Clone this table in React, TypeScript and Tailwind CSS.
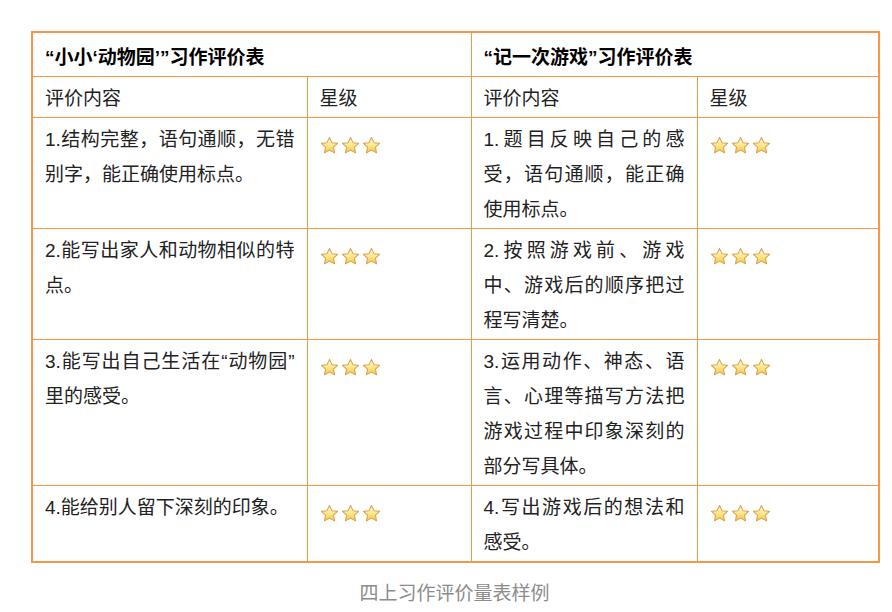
const Q = ({ children }: { children: string }) => (
  <span className="font-['Liberation_Sans',sans-serif]">{children}</span>
);

const rowsLeft = [
  <>1.结构完整，语句通顺，无错别字，能正确使用标点。</>,
  <>2.能写出家人和动物相似的特点。</>,
  <>
    3.能写出自己生活在<Q>“</Q>动物园<Q>”</Q>
    <wbr />
    里的感受。
  </>,
  <>4.能给别人留下深刻的印象。</>,
];

const rowsRight = [
  "1.题目反映自己的感受，语句通顺，能正确使用标点。",
  "2.按照游戏前、游戏中、游戏后的顺序把过程写清楚。",
  "3.运用动作、神态、语言、心理等描写方法把游戏过程中印象深刻的部分写具体。",
  "4.写出游戏后的想法和感受。",
];

const Star = () => (
  <svg width="19" height="19" viewBox="0 0 24 24">
    <defs>
      <linearGradient id="starFill" x1="0" y1="0" x2="0" y2="1">
        <stop offset="0%" stopColor="#fffbe0" />
        <stop offset="55%" stopColor="#fbe58a" />
        <stop offset="100%" stopColor="#f2c244" />
      </linearGradient>
    </defs>
    <path
      d="M12 1.8l3.1 6.6 7.1.9-5.2 4.9 1.4 7.1L12 17.8l-6.4 3.5 1.4-7.1-5.2-4.9 7.1-.9z"
      fill="url(#starFill)"
      stroke="#dca04a"
      strokeWidth="1.3"
      strokeLinejoin="round"
    />
  </svg>
);

const Stars = () => (
  <div className="flex gap-[2px] pt-[14px]">
    <Star />
    <Star />
    <Star />
  </div>
);

const cell = "border border-[#f79646] px-3 pt-[4px] pb-[1px] align-top";

export default function App() {
  return (
    <div
      className="min-h-screen bg-white pt-[31px] text-[19px] leading-[35px] text-[#222]"
      style={{ fontFamily: '"Liberation Sans", "Noto Sans CJK SC", sans-serif' }}
    >
      <div className="ml-[31px] w-[847px]">
        <table className="w-full table-fixed border-collapse border-2 border-[#f79646]">
          <colgroup>
            <col className="w-[275px]" />
            <col className="w-[164px]" />
            <col className="w-[226px]" />
            <col className="w-[182px]" />
          </colgroup>
          <tbody>
            <tr>
              <td colSpan={2} className={`${cell} pt-[7px] pb-[1px] font-bold text-black`}>
                <Q>“</Q>小小<Q>‘</Q>动物园<Q>’”</Q>习作评价表
              </td>
              <td colSpan={2} className={`${cell} pt-[7px] pb-[1px] font-bold text-black`}>
                <Q>“</Q>记一次游戏<Q>”</Q>习作评价表
              </td>
            </tr>
            <tr>
              <td className={cell}>评价内容</td>
              <td className={cell}>星级</td>
              <td className={cell}>评价内容</td>
              <td className={cell}>星级</td>
            </tr>
            {rowsLeft.map((text, i) => (
              <tr key={i}>
                <td className={`${cell} text-justify`}>{text}</td>
                <td className={cell}>
                  <Stars />
                </td>
                <td className={`${cell} text-justify`}>{rowsRight[i]}</td>
                <td className={cell}>
                  <Stars />
                </td>
              </tr>
            ))}
          </tbody>
        </table>
        <p className="mt-[13px] text-center text-[#8c8c8c]">四上习作评价量表样例</p>
      </div>
    </div>
  );
}
